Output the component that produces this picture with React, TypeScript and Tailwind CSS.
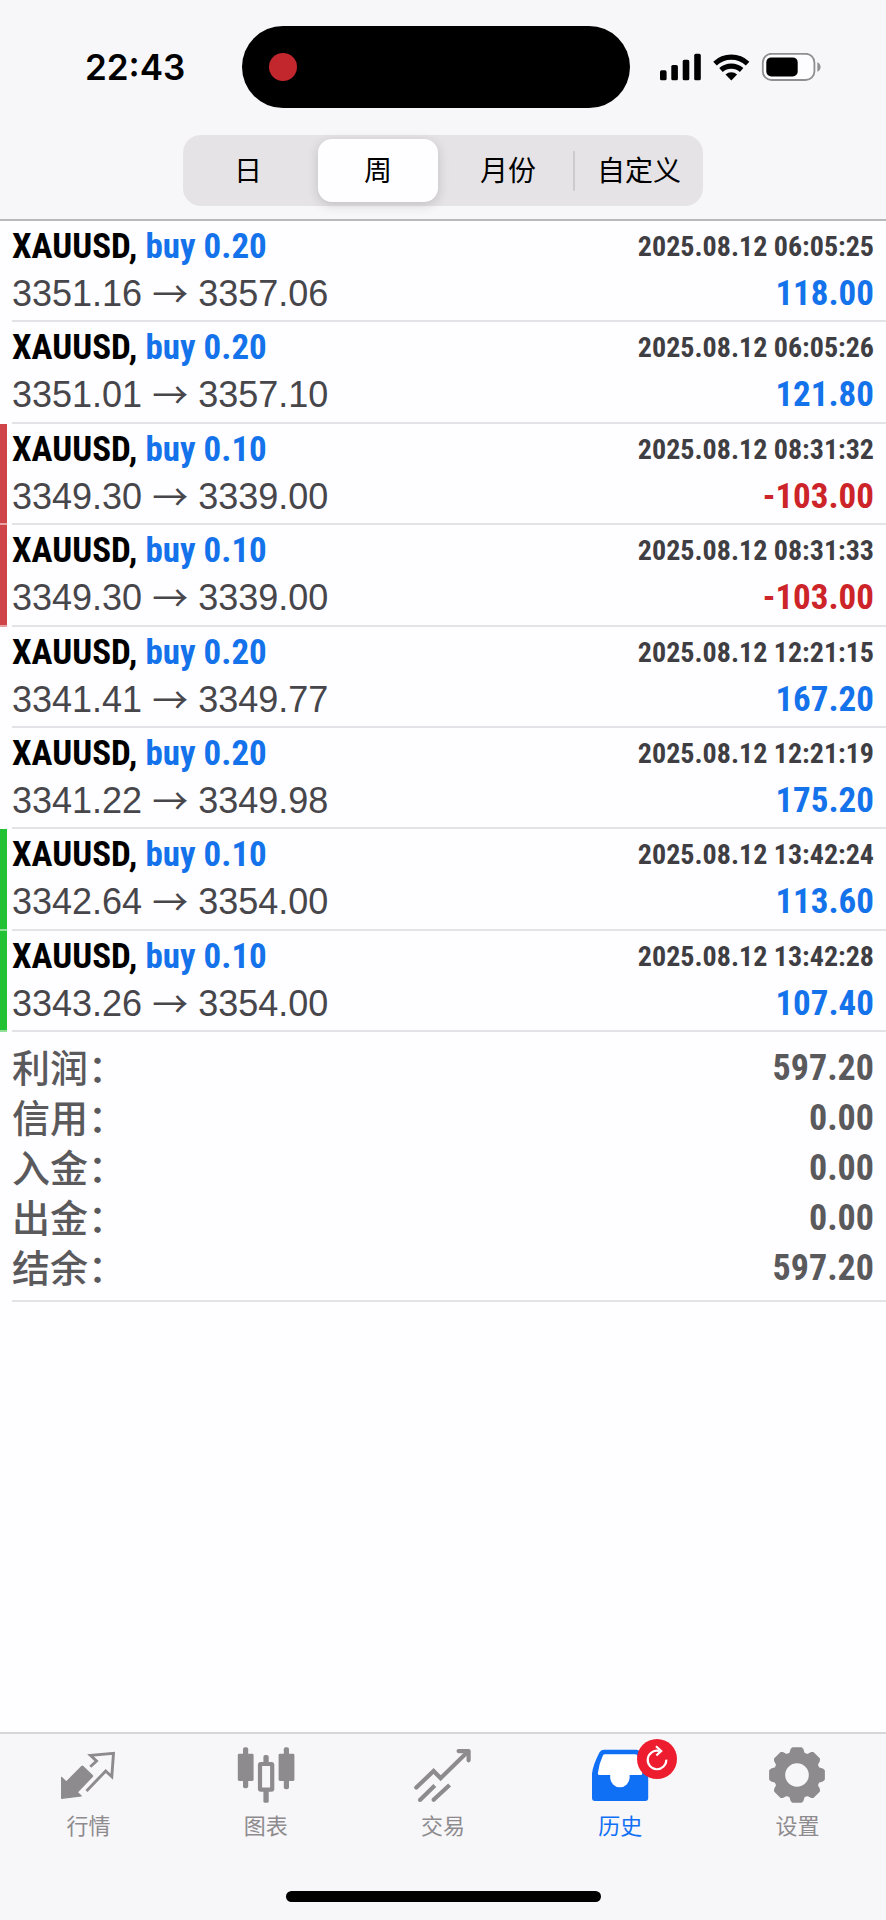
import { useState } from "react";
import type { ReactNode } from "react";

type Outcome = "none" | "sl" | "tp";

interface Deal {
  volume: string;
  open: string;
  close: string;
  time: string;
  profit: string;
  outcome: Outcome;
}

const deals: Deal[] = [
  { volume: "0.20", open: "3351.16", close: "3357.06", time: "2025.08.12 06:05:25", profit: "118.00", outcome: "none" },
  { volume: "0.20", open: "3351.01", close: "3357.10", time: "2025.08.12 06:05:26", profit: "121.80", outcome: "none" },
  { volume: "0.10", open: "3349.30", close: "3339.00", time: "2025.08.12 08:31:32", profit: "-103.00", outcome: "sl" },
  { volume: "0.10", open: "3349.30", close: "3339.00", time: "2025.08.12 08:31:33", profit: "-103.00", outcome: "sl" },
  { volume: "0.20", open: "3341.41", close: "3349.77", time: "2025.08.12 12:21:15", profit: "167.20", outcome: "none" },
  { volume: "0.20", open: "3341.22", close: "3349.98", time: "2025.08.12 12:21:19", profit: "175.20", outcome: "none" },
  { volume: "0.10", open: "3342.64", close: "3354.00", time: "2025.08.12 13:42:24", profit: "113.60", outcome: "tp" },
  { volume: "0.10", open: "3343.26", close: "3354.00", time: "2025.08.12 13:42:28", profit: "107.40", outcome: "tp" },
];

const totals = [
  { label: "利润：", value: "597.20" },
  { label: "信用：", value: "0.00" },
  { label: "入金：", value: "0.00" },
  { label: "出金：", value: "0.00" },
  { label: "结余：", value: "597.20" },
];

const periods = ["日", "周", "月份", "自定义"];

const outcomeBar: Record<Outcome, string> = {
  none: "border-transparent bg-transparent",
  sl: "border-white/50 bg-[#cf4449]",
  tp: "border-white/50 bg-[#22c234]",
};

function StatusIcons() {
  return (
    <svg viewBox="0 0 161 28" className="h-7 w-[161px] shrink-0" aria-hidden="true">
      <rect x="0" y="17.3" width="6.6" height="10" rx="1.6" />
      <rect x="11.3" y="12" width="6.6" height="15.3" rx="1.6" />
      <rect x="22.7" y="6.8" width="6.6" height="20.5" rx="1.6" />
      <rect x="34.2" y="0.8" width="6.6" height="26.5" rx="1.6" />
      <g fill="none" stroke="#000" strokeWidth="5.2">
        <path d="M55 10.6a24 24 0 0 1 32.6 0" />
        <path d="M61 17a15.4 15.4 0 0 1 20.6 0" />
      </g>
      <path d="M71.3 27.4l-5.8-6a8.6 8.6 0 0 1 11.6 0z" />
      <rect x="102.8" y="0.8" width="51.6" height="26.2" rx="8.6" fill="#fdfcfe" stroke="#8f8e91" strokeWidth="1.8" />
      <rect x="106.3" y="4.4" width="31.4" height="19" rx="5" />
      <path d="M157.4 9.2c4.2 1.8 4.2 7.8 0 9.6z" fill="#8f8e91" />
    </svg>
  );
}

function QuotesIcon() {
  return (
    <svg viewBox="0 0 56 56" className="size-14 overflow-visible" aria-hidden="true">
      <path
        d="M.6 30.4l4.7 4.6 15.4-15.6q.6-.6 1.2 0l9.4 9q.6.6 0 1.2L16.2 45.3l4 3.6-19.6 2.4z"
        fill="currentColor" stroke="currentColor" strokeWidth="1.2" strokeLinejoin="round"
      />
      <path d="M29.3 19.8l6.2-5.8-6-5.6 23-2.1-1.7 23.4-6.1-5.7-19.2 20" fill="none" stroke="currentColor" strokeWidth="2.9" />
    </svg>
  );
}

function ChartIcon() {
  return (
    <svg viewBox="0 0 56 56" className="size-14 overflow-visible" fill="currentColor" aria-hidden="true">
      <rect x="-.2" y="6.7" width="15.8" height="27.2" rx="1.4" />
      <rect x="5" y=".2" width="5.2" height="41" rx="2" />
      <rect x="22" y="17" width="12.2" height="25.6" rx=".8" fill="none" stroke="currentColor" strokeWidth="4.2" />
      <rect x="25.4" y="8" width="5.3" height="10" rx="2" />
      <rect x="25.4" y="42" width="5.3" height="13.8" rx="1.6" />
      <rect x="40.6" y="6.7" width="15.8" height="27.2" rx="1.4" />
      <rect x="45.8" y=".2" width="5.2" height="42" rx="2" />
    </svg>
  );
}

function TradeIcon() {
  return (
    <svg viewBox="0 0 56 56" className="size-14 overflow-visible" fill="none" stroke="currentColor" strokeWidth="4.2" aria-hidden="true">
      <path d="M1.3 40.6L18.6 24l7 7.2L53 4.6" strokeLinecap="round" />
      <path d="M43.6 4.1h10v9.2" strokeLinecap="round" strokeLinejoin="round" />
      <path d="M5 53l14.8-14.6M18.6 52.8L34.6 38" />
      <g fill="currentColor" stroke="none">
        <circle cx="5" cy="53" r="2.1" />
        <circle cx="18.6" cy="52.8" r="2.1" />
      </g>
    </svg>
  );
}

function HistoryIcon() {
  return (
    <span className="relative block">
      <svg viewBox="0 0 56 56" className="size-14 overflow-visible" aria-hidden="true">
        <path d="M0 26.5Q1 18 7.4 5.6 8.8 2.7 12 2.7h32q3.2 0 4.6 2.9Q55 18 56.2 26.5V51q0 3-3 3H3q-3 0-3-3z" fill="currentColor" />
        <path d="M13 7.3h30.2q1.5 0 2.1 1.3 4 8.4 5 17.4.2 2-1.6 2H37.6v2.6a9.7 9.7 0 0 1-19.4 0V28H7.5q-1.8 0-1.6-2 1-9 5-17.4.6-1.3 2.1-1.3z" fill="#fff" />
      </svg>
      <span className="absolute -top-2 left-[45px] block size-10 rounded-full bg-[#ed1c2e]">
        <svg viewBox="0 0 40 40" className="size-10" fill="none" stroke="#fff" strokeWidth="2.2" aria-hidden="true">
          <path d="M29.3 20.6a9.3 9.3 0 1 1-7.2-8.7" />
          <path d="M19 7.2l5.2 4.7-4.8 4.6" />
        </svg>
      </span>
    </span>
  );
}

function gearOutline(): string {
  const points: string[] = [];
  for (let tooth = 0; tooth < 8; tooth++) {
    for (const [offset, radius] of [[-18, 22.6], [-12.5, 26.2], [-9, 27.4], [9, 27.4], [12.5, 26.2], [18, 22.6]]) {
      const angle = ((tooth * 45 + offset) * Math.PI) / 180;
      points.push(`${(28 + radius * Math.sin(angle)).toFixed(2)} ${(28 - radius * Math.cos(angle)).toFixed(2)}`);
    }
  }
  return `M${points.join("L")}Z`;
}

function SettingsIcon() {
  return (
    <svg viewBox="0 0 56 56" className="size-14 overflow-visible" aria-hidden="true">
      <path
        d={`${gearOutline()}M28 15.4a12.6 12.6 0 1 0 0 25.2 12.6 12.6 0 0 0 0-25.2z`}
        fill="currentColor" fillRule="evenodd" stroke="currentColor" strokeWidth="1.6" strokeLinejoin="round"
      />
    </svg>
  );
}

const tabs: { label: string; icon: ReactNode; current?: boolean }[] = [
  { label: "行情", icon: <QuotesIcon /> },
  { label: "图表", icon: <ChartIcon /> },
  { label: "交易", icon: <TradeIcon /> },
  { label: "历史", icon: <HistoryIcon />, current: true },
  { label: "设置", icon: <SettingsIcon /> },
];

function DealRow({ deal }: { deal: Deal }) {
  return (
    <li className="flex">
      <span className={`w-[7px] shrink-0 border-b-2 ${outcomeBar[deal.outcome]}`} />
      <div className="ml-[5px] flex-1 border-b-2 border-[#e3e2e6] pt-[3px] pr-3">
        <div className="flex items-center justify-between font-['Roboto_Condensed','Roboto',sans-serif] font-bold">
          <span className="text-[35px] leading-[46px] text-black">
            XAUUSD, <span className="text-[#1472ea]">buy {deal.volume}</span>
          </span>
          <time className="text-[28px] leading-[46px] text-[#3f3e43]">{deal.time}</time>
        </div>
        <div className="flex items-center justify-between">
          <span className="text-4xl leading-[48px] text-[#47464b]">
            {deal.open} <span className="align-[-2px] font-['Noto_Sans_CJK_SC',sans-serif] leading-none">→</span> {deal.close}
          </span>
          <span
            className={`font-['Roboto_Condensed','Roboto',sans-serif] text-[35px] leading-[48px] font-bold ${
              deal.profit.startsWith("-") ? "text-[#cc2428]" : "text-[#1472ea]"
            }`}
          >
            {deal.profit}
          </span>
        </div>
      </div>
    </li>
  );
}

export default function App() {
  const [period, setPeriod] = useState("周");

  return (
    <div className="flex min-h-screen flex-col bg-[#fefdff] font-['Liberation_Sans','Noto_Sans_CJK_SC',sans-serif]">
      <header className="border-b-2 border-[#b9b8bc] bg-[#f7f6f9] pb-[13px]">
        <div className="flex items-center pt-[26px] pr-[65px] pl-[85px]">
          <time className="font-['Inter',sans-serif] text-[35px] leading-none font-semibold">22:43</time>
          <div className="ml-[57px] flex h-[82px] flex-1 items-center rounded-full bg-black pl-[27px]">
            <span className="size-7 rounded-full bg-[#c1272d]" />
          </div>
          <div className="ml-[30px]">
            <StatusIcons />
          </div>
        </div>
        <div className="mx-auto mt-[27px] grid h-[71px] max-w-[520px] grid-cols-4 rounded-[18px] bg-[#e5e3e6]" role="group">
          {periods.map((name, index) => (
            <div key={name} className={`flex items-center ${index === 3 ? "border-transparent" : ""}`}>
              {index === 3 && <span className="h-10 w-0.5 shrink-0 rounded-full bg-[#cbcace]" />}
              <button
                type="button"
                aria-pressed={period === name}
                onClick={() => setPeriod(name)}
                className={`mx-[5px] h-[63px] flex-1 rounded-[14px] pt-[3px] text-[28px] whitespace-nowrap text-black ${
                  period === name ? "bg-[#fefdff] shadow-[0_3px_12px_rgba(0,0,0,0.16)]" : ""
                }`}
              >
                {name}
              </button>
            </div>
          ))}
        </div>
      </header>

      <main className="flex-1">
        <ul className="grid min-h-[811px] auto-rows-fr">
          {deals.map((deal) => (
            <DealRow key={deal.time} deal={deal} />
          ))}
        </ul>
        <dl className="ml-3 border-b-2 border-[#e3e2e6] py-[9px] pr-3 text-[#5a595c]">
          {totals.map(({ label, value }) => (
            <div key={label} className="flex items-center justify-between leading-[50px]">
              <dt className="font-['Noto_Sans_CJK_SC',sans-serif] text-[38px] font-medium">{label}</dt>
              <dd className="pt-1 font-['Roboto_Condensed','Roboto',sans-serif] text-4xl leading-[46px] font-bold">{value}</dd>
            </div>
          ))}
        </dl>
      </main>

      <footer className="border-t-2 border-[#d6d5d9] bg-[#f7f6f9] pt-[13px] pb-[18px]">
        <nav className="grid grid-cols-5">
          {tabs.map(({ label, icon, current }) => (
            <a
              key={label}
              href={`#${label}`}
              aria-current={current ? "page" : undefined}
              className={`flex flex-col items-center gap-2 text-[22px] leading-8 ${current ? "text-[#0f70f5]" : "text-[#8d8b8e]"}`}
            >
              {icon}
              {label}
            </a>
          ))}
        </nav>
        <div className="mx-auto mt-12 h-[11px] max-w-[315px] rounded-full bg-black" />
      </footer>
    </div>
  );
}
